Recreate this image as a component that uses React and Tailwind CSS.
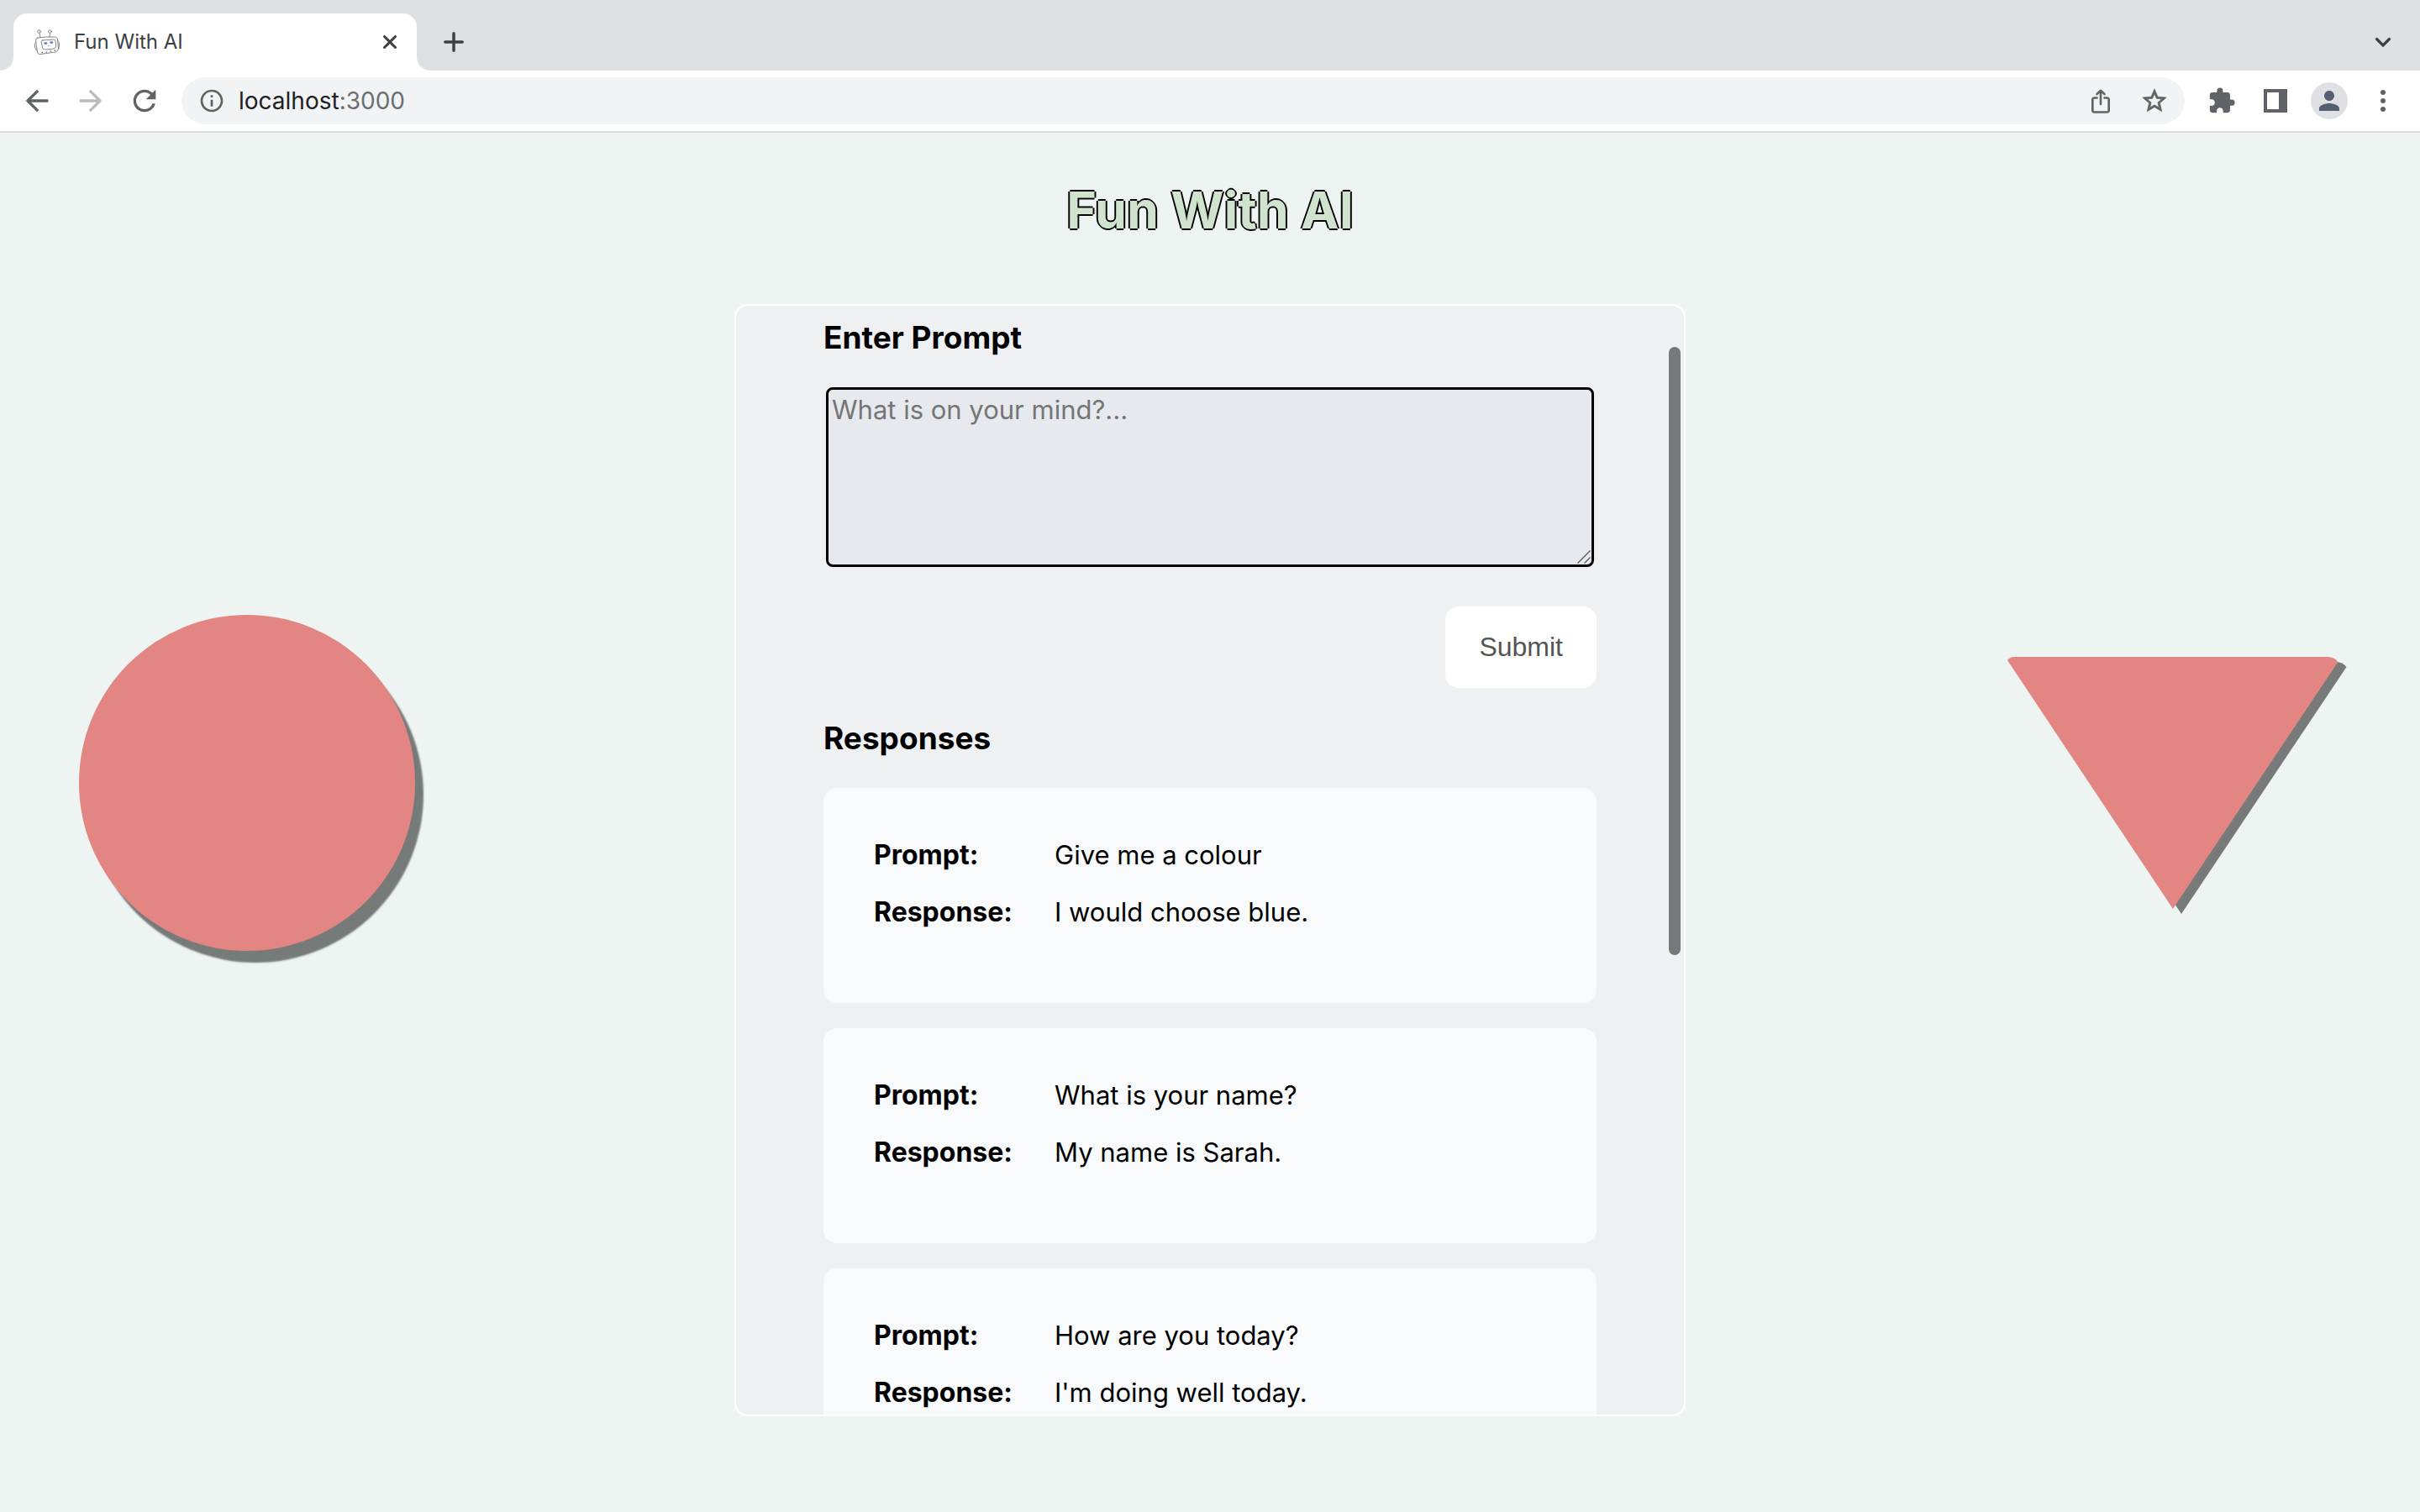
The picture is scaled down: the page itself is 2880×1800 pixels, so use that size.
import { useState } from "react";
import { MdArrowBack, MdArrowForward, MdRefresh, MdStarOutline, MdExtension, MdInfoOutline, MdPerson } from "react-icons/md";

const exchanges = [
  { prompt: "Give me a colour", response: "I would choose blue." },
  { prompt: "What is your name?", response: "My name is Sarah." },
  { prompt: "How are you today?", response: "I'm doing well today." },
];

function RobotIcon() {
  return (
    <svg viewBox="0 0 32 32" className="size-8" fill="none" stroke="#77797c" strokeWidth="0.9" strokeLinecap="round" aria-hidden="true">
      <circle cx="6.5" cy="3.5" r="1.8" />
      <circle cx="19.5" cy="3.5" r="1.8" />
      <path d="M7 5.5 8 10.5M19.5 5.5 19 10" />
      <path d="M5 11Q14 9.5 26 10Q28.5 10.5 28.5 13L29.5 24Q29.5 27 26 28L8 30.500Q5 31 4.5 28L2.5 14Q2.5 11.500 5 11Z" />
      <path d="M10.5 14 24 13Q26 13 26 15L26.5 21Q26.5 23.500 24 24L13.5 25Q11 25 10.5 22.500L9 16Q9 14.500 10.5 14Z" />
      <path d="M2.5 16Q.5 18 1.500 22L3.500 26M28.500 14Q31 16 30.500 20L30 24" />
      <path d="M10 28.500h.5M15 28h.5M20 27h.5M25 26h.5" strokeWidth="1.500" />
      <path d="M13.500 17.500h1.500M20.500 16.500h1.500" stroke="#5b7be0" strokeWidth="2.500" />
      <path d="M17.500 20.500h.5" stroke="#5b7be0" />
    </svg>
  );
}

function IconButton({ label, children }) {
  return (
    <button aria-label={label} className="grid size-11 place-items-center">
      {children}
    </button>
  );
}

function BrowserBar() {
  return (
    <header className="shrink-0 border-b-2 border-[#dadcdd] bg-white text-[#5f6368]">
      <div className="flex h-[84px] items-end bg-[#dfe0e4] pl-4 pr-[26px]">
        <div className="relative flex h-[68px] w-[480px] items-center rounded-t-2xl bg-white pl-6 pr-5">
          <svg viewBox="0 0 16 16" className="absolute bottom-0 right-full size-4" aria-hidden="true">
            <path d="M16 0V16H0A16 16 0 0 0 16 0Z" fill="#fff" />
          </svg>
          <svg viewBox="0 0 16 16" className="absolute bottom-0 left-full size-4" aria-hidden="true">
            <path d="M0 0V16H16A16 16 0 0 1 0 0Z" fill="#fff" />
          </svg>
          <RobotIcon />
          <span className="ml-4 flex-1 text-[24px] leading-8 text-[#3c4043]">Fun With AI</span>
          <button aria-label="Close tab" className="p-1 text-[#3c4043]">
            <svg viewBox="0 0 16 16" className="size-4" fill="none" stroke="currentColor" strokeWidth="3" strokeLinecap="round">
              <path d="M1.500 1.500 14.500 14.500M14.500 1.500 1.500 14.500" />
            </svg>
          </button>
        </div>
        <button aria-label="New tab" className="ml-8 flex h-[68px] items-center text-[#3c4043]">
          <svg viewBox="0 0 24 24" className="size-6" fill="none" stroke="currentColor" strokeWidth="3.500" strokeLinecap="round">
            <path d="M12 1.800V22.200M1.800 12H22.200" />
          </svg>
        </button>
        <button aria-label="Search tabs" className="ml-auto flex h-[68px] items-center text-[#3c4043]">
          <svg viewBox="0 0 36 24" className="h-6 w-9" fill="none" stroke="currentColor" strokeWidth="3.200" strokeLinecap="round" strokeLinejoin="miter">
            <path d="M10.500 8.500 18 16 25.500 8.500" />
          </svg>
        </button>
      </div>
      <div className="flex h-[72px] items-center pl-6 pr-[22px]">
        <nav className="flex gap-6">
          <button aria-label="Back"><MdArrowBack className="size-10" /></button>
          <button aria-label="Forward" className="text-[#babcbe]"><MdArrowForward className="size-10" /></button>
          <button aria-label="Reload"><MdRefresh className="size-10" /></button>
        </nav>
        <div className="ml-6 flex h-14 flex-1 items-center rounded-full bg-[#f1f3f4] pl-5 pr-3.5">
          <MdInfoOutline className="size-8" />
          <a href="#localhost" className="ml-4 text-[28px] leading-8 text-[#202124]">
            localhost<span className="text-[#6b6f73]">:3000</span>
          </a>
          <div className="ml-auto flex gap-5">
            <IconButton label="Share">
              <svg viewBox="0 0 40 40" className="size-10" fill="none" stroke="currentColor" strokeWidth="2.600" strokeLinecap="round" strokeLinejoin="round">
                <path d="M15.500 16.500H12.500Q10.300 16.500 10.300 18.700V31Q10.300 33.500 12.800 33.500H27.200Q29.700 33.500 29.700 31V18.700Q29.700 16.500 27.500 16.500H24.500" />
                <path d="M20 24V8.500M15.500 12 20 7.800 24.500 12" />
              </svg>
            </IconButton>
            <IconButton label="Bookmark"><MdStarOutline className="size-[34px]" stroke="currentColor" strokeWidth="0.5" /></IconButton>
          </div>
        </div>
        <div className="ml-[22px] flex items-center gap-5">
          <IconButton label="Extensions"><MdExtension className="size-[34px]" /></IconButton>
          <IconButton label="Side panel">
            <svg viewBox="0 0 36 36" className="size-9" fill="currentColor"><path fillRule="evenodd" d="M4 4H32V32H4ZM8 8V28H22V8Z" /></svg>
          </IconButton>
          <button aria-label="Profile" className="grid size-11 place-items-center rounded-full bg-[#dfe0e4] text-[#565e71]">
            <MdPerson className="size-9" />
          </button>
          <IconButton label="Menu">
            <svg viewBox="0 0 40 40" className="size-10" fill="currentColor"><circle cx="20" cy="10" r="3" /><circle cx="20" cy="20" r="3" /><circle cx="20" cy="30" r="3" /></svg>
          </IconButton>
        </div>
      </div>
    </header>
  );
}

function Triangle() {
  const shape = "M3 4Q6 0 11 0H384Q392 0 396.500 6L200 300Z";
  return (
    <svg viewBox="0 0 400 300" className="mt-[420px] h-[300px] w-[400px] shrink-0 overflow-visible" aria-hidden="true">
      <path d={shape} transform="translate(10 6)" fill="#777a79" />
      <path d={shape} fill="#e38582" />
    </svg>
  );
}

function ResponseCard({ prompt, response }) {
  return (
    <li className="rounded-2xl bg-[#f9fafc] px-[60px] pb-[88px] pt-[60px]">
      <dl className="grid grid-cols-[215px_1fr] gap-y-7 text-[31px] leading-10">
        <dt className="text-[32px] font-bold leading-10">Prompt:</dt>
        <dd>{prompt}</dd>
        <dt className="text-[32px] font-bold leading-10">Response:</dt>
        <dd>{response}</dd>
      </dl>
    </li>
  );
}

function PromptPanel() {
  const [text, setText] = useState("");
  return (
    <section className="relative w-[1132px] shrink-0 overflow-hidden rounded-2xl border-2 border-white bg-[#eff0f2]">
      <div className="h-full overflow-y-auto px-[104px] pt-4 text-black [scrollbar-width:none]">
        <form onSubmit={(e) => e.preventDefault()}>
          <label htmlFor="prompt" className="block text-[37px] font-bold leading-[44px]">Enter Prompt</label>
          <div className="relative mx-[3px] mt-[37px]">
            <textarea
              id="prompt"
              value={text}
              onChange={(e) => setText(e.target.value)}
              placeholder="What is on your mind?..."
              className="block h-[214px] w-full resize-none rounded-lg border-[3px] border-black bg-[#e6eaee] px-1 py-1 text-[31px] leading-10 outline-none placeholder:text-[#757575]"
            />
            <svg viewBox="0 0 16 16" className="absolute bottom-1 right-1 size-4" fill="none" stroke="#55585c" strokeWidth="1.300" aria-hidden="true">
              <path d="M.5 15.500 15.500.5M8.500 15.500 15.500 8.500" />
            </svg>
          </div>
          <div className="mt-[47px] flex justify-end">
            <button type="submit" className="rounded-2xl bg-white px-10 py-[30px] font-['Liberation_Sans',sans-serif] text-[32px] leading-[37px] text-[#555]">Submit</button>
          </div>
        </form>
        <h2 className="mt-[38px] text-[37px] font-bold leading-[44px]">Responses</h2>
        <ul className="mt-[37px] flex flex-col gap-[30px]">
          {exchanges.map((item) => (
            <ResponseCard key={item.prompt} {...item} />
          ))}
        </ul>
      </div>
      <div className="absolute right-1 top-[49px] h-[724px] w-3.5 rounded-full bg-[#77787a]" />
    </section>
  );
}

export default function App() {
  return (
    <div className="flex h-screen flex-col bg-[#edf4f2] font-[Inter,sans-serif]">
      <BrowserBar />
      <main className="flex min-h-0 flex-1 flex-col px-[94px] pb-[114px] pt-[52px]">
        <h1 className="mb-[72px] text-center text-[61px] font-bold leading-[80px] text-[#d0e3cf] [text-shadow:-2px_0_#000,0_2px_#000,2px_0_#000,0_-2px_#000]">
          Fun With AI
        </h1>
        <div className="flex min-h-0 flex-1 justify-between">
          <div className="mt-[370px] size-[400px] shrink-0 rounded-full bg-[#e38582] shadow-[10px_14px_2px_rgba(0,0,0,0.5)]" />
          <PromptPanel />
          <Triangle />
        </div>
      </main>
    </div>
  );
}
